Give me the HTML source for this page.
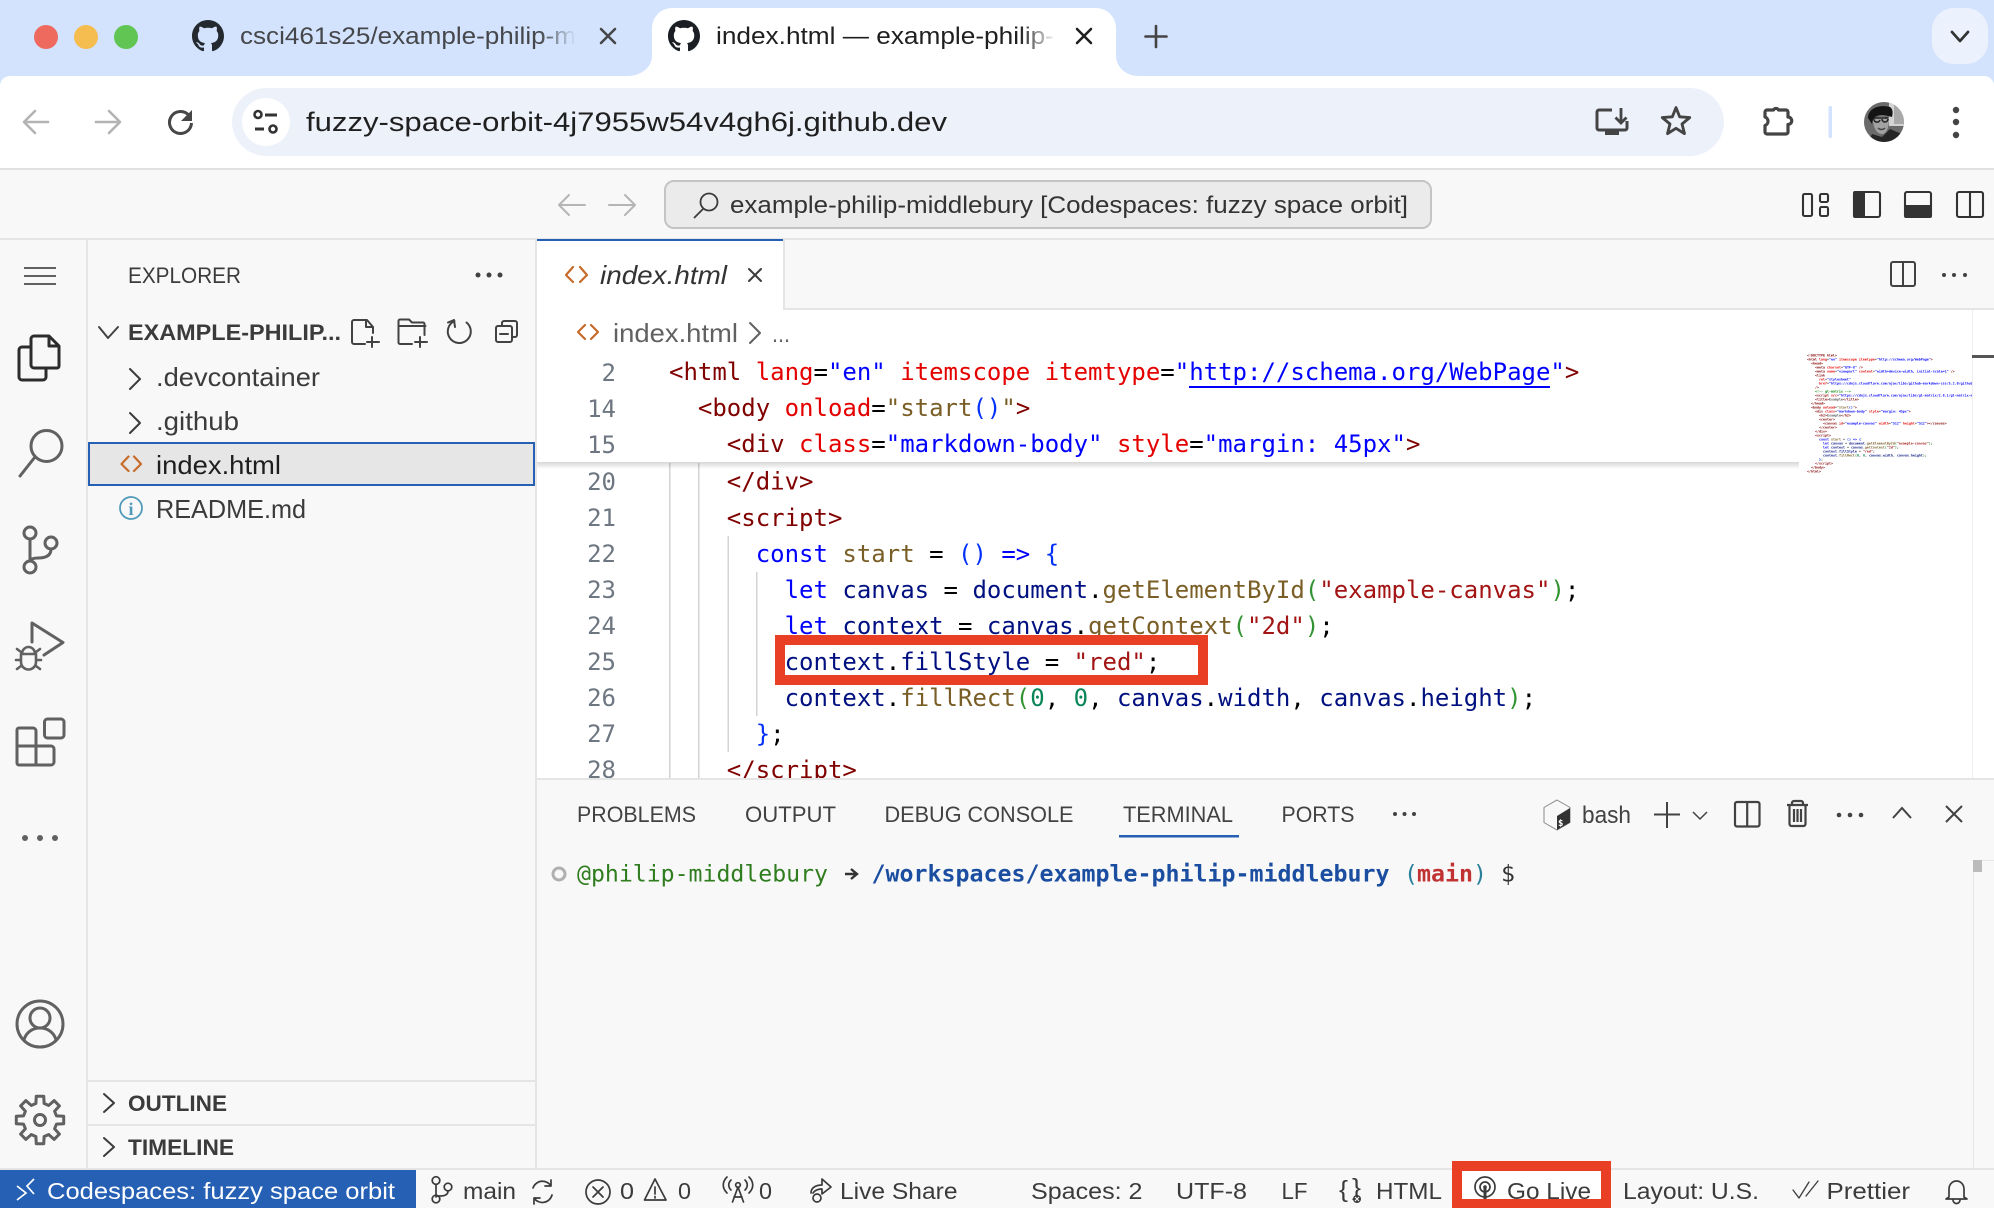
<!DOCTYPE html>
<html lang="en">
<head>
<meta charset="utf-8">
<title>index.html — example-philip-middlebury</title>
<style>
html,body{margin:0;padding:0;background:#f8f8f8;width:1994px;height:1208px;overflow:hidden}
svg{display:block}
text{font-family:"Liberation Sans",sans-serif;white-space:pre}
.m text,text.m{font-family:"DejaVu Sans Mono","Liberation Mono",monospace}
.code text{font-size:24px;fill:#000}
.ln text{font-size:24px;fill:#6e7681;text-anchor:end}
.mini text{font-size:3.32px;fill:#555;font-weight:700;text-rendering:geometricPrecision}
.t{fill:#800000}.a{fill:#e50000}.v{fill:#0000ff}.f{fill:#795e26}.d{fill:#001080}.s{fill:#a31515}.b{fill:#0431fa}.g{fill:#319331}.n{fill:#098658}.k{fill:#0000ff}
.st text{font-size:23px;fill:#3b3b3b}
.ic{fill:none;stroke:#616161;stroke-width:3;stroke-linecap:round;stroke-linejoin:round}
.ic2{fill:none;stroke:#3b3b3b;stroke-width:1.7;stroke-linecap:round;stroke-linejoin:round}
.tb{fill:none;stroke:#424242;stroke-width:2;stroke-linecap:round;stroke-linejoin:round}
</style>
</head>
<body>
<svg xmlns="http://www.w3.org/2000/svg" width="1994" height="1208" viewBox="0 0 1994 1208">
<defs>
<linearGradient id="f1" x1="0" x2="1" y1="0" y2="0"><stop offset="0" stop-color="#d3e3fd" stop-opacity="0"/><stop offset="1" stop-color="#d3e3fd"/></linearGradient>
<linearGradient id="f2" x1="0" x2="1" y1="0" y2="0"><stop offset="0" stop-color="#fff" stop-opacity="0"/><stop offset="1" stop-color="#fff"/></linearGradient>
<linearGradient id="sh" x1="0" x2="0" y1="0" y2="1"><stop offset="0" stop-color="#000" stop-opacity=".16"/><stop offset="1" stop-color="#000" stop-opacity="0"/></linearGradient>
<clipPath id="ed"><rect x="537" y="310" width="1262" height="468"/></clipPath>
<clipPath id="mm"><rect x="1800" y="340" width="172" height="140"/></clipPath>
<clipPath id="av"><circle cx="1884" cy="122" r="20"/></clipPath>
<path id="gh" d="M8 0C3.58 0 0 3.58 0 8c0 3.54 2.29 6.53 5.47 7.59.4.07.55-.17.55-.38 0-.19-.01-.82-.01-1.49-2.01.37-2.53-.49-2.69-.94-.09-.23-.48-.94-.82-1.13-.28-.15-.68-.52-.01-.53.63-.01 1.08.58 1.23.82.72 1.21 1.87.87 2.33.66.07-.52.28-.87.51-1.07-1.78-.2-3.64-.89-3.64-3.95 0-.87.31-1.59.82-2.15-.08-.2-.36-1.02.08-2.12 0 0 .67-.21 2.2.82.64-.18 1.32-.27 2-.27.68 0 1.36.09 2 .27 1.53-1.04 2.2-.82 2.2-.82.44 1.1.16 1.92.08 2.12.51.56.82 1.27.82 2.15 0 3.07-1.87 3.75-3.65 3.95.29.25.54.73.54 1.48 0 1.07-.01 1.93-.01 2.2 0 .21.15.46.55.38A8.013 8.013 0 0016 8c0-4.42-3.58-8-8-8z"/>
</defs>

<!-- page background -->
<rect width="1994" height="1208" fill="#f8f8f8"/>

<!-- tab strip -->
<rect width="1994" height="84" fill="#d3e3fd"/>
<path d="M0 86a10 10 0 0 1 10-10H1984a10 10 0 0 1 10 10V168H0z" fill="#fff"/>
<circle cx="46" cy="37" r="12" fill="#ee6a5f"/>
<circle cx="86" cy="37" r="12" fill="#f5bd4f"/>
<circle cx="126" cy="37" r="12" fill="#61c554"/>
<use href="#gh" transform="translate(192,20) scale(2)" fill="#24292f"/>
<text x="240" y="44" font-size="24" fill="#45474a" textLength="336" lengthAdjust="spacingAndGlyphs">csci461s25/example-philip-m</text>
<rect x="540" y="14" width="36" height="44" fill="url(#f1)"/>
<path d="M601 29l14 14M615 29l-14 14" fill="none" stroke="#45474a" stroke-width="2.6" stroke-linecap="round"/>
<path d="M628 76a24 20 0 0 0 24-20V28a20 20 0 0 1 20-20H1096a20 20 0 0 1 20 20V56a22 20 0 0 0 22 20Z" fill="#fff"/>
<use href="#gh" transform="translate(668,20) scale(2)" fill="#1b1f23"/>
<text x="716" y="44" font-size="24" fill="#1f1f1f" textLength="338" lengthAdjust="spacingAndGlyphs">index.html — example-philip-</text>
<rect x="1020" y="14" width="36" height="44" fill="url(#f2)"/>
<path d="M1077 29l14 14M1091 29l-14 14" fill="none" stroke="#1f1f1f" stroke-width="2.6" stroke-linecap="round"/>
<path d="M1156 26v21M1145.500 36.500h21" fill="none" stroke="#444" stroke-width="2.600" stroke-linecap="round"/>
<rect x="1932" y="8" width="56" height="56" rx="22" fill="#ecf2fd"/>
<path d="M1952 32l8 9 8-9" fill="none" stroke="#333" stroke-width="2.800" stroke-linecap="round" stroke-linejoin="round"/>

<!-- toolbar -->
<path d="M48 122H26M35 111L24 122L35 133" fill="none" stroke="#b3b3b3" stroke-width="2.600" stroke-linecap="round" stroke-linejoin="round"/>
<path d="M96 122H118M109 111L120 122L109 133" fill="none" stroke="#b3b3b3" stroke-width="2.600" stroke-linecap="round" stroke-linejoin="round"/>
<path d="M189 115.500a11 11 0 1 0 2.500 7.500" fill="none" stroke="#474747" stroke-width="3"/>
<path d="M192 110v11h-11z" fill="#474747"/>
<rect x="232" y="88" width="1492" height="68" rx="34" fill="#edf2fa"/>
<circle cx="266" cy="122" r="24" fill="#fff"/>
<circle cx="258" cy="114.500" r="3.500" fill="none" stroke="#333" stroke-width="2.600"/>
<path d="M265 115h12M255 129h9" stroke="#333" stroke-width="3" fill="none"/>
<circle cx="273" cy="129" r="3.500" fill="none" stroke="#333" stroke-width="2.600"/>
<text x="306" y="131" font-size="26.500" fill="#1f1f1f" textLength="641" lengthAdjust="spacingAndGlyphs">fuzzy-space-orbit-4j7955w54v4gh6j.github.dev</text>
<path d="M1612 110h-13a2 2 0 0 0-2 2v16a2 2 0 0 0 2 2h26a2 2 0 0 0 2-2v-7" fill="none" stroke="#444" stroke-width="3"/>
<rect x="1605" y="130" width="14" height="5" fill="#444"/>
<path d="M1621 108v14M1615.500 117.500l5.500 5.500 5.500-5.500" fill="none" stroke="#444" stroke-width="2.800"/>
<path transform="translate(1676,122) scale(.9)" d="M0-16L4.100-5.700 15.200-4.900 6.700 2.200 9.400 12.900 0 7-9.400 12.900-6.700 2.200-15.200-4.900-4.100-5.700Z" fill="none" stroke="#444" stroke-width="3.200" stroke-linejoin="round"/>
<path d="M1767 110h6.500a2.800 2.800 0 0 1 5 0H1786a2 2 0 0 1 2 2v5a3.500 3.500 0 0 1 0 7.500V132a2 2 0 0 1-2 2H1767a2 2 0 0 1-2-2v-6.500a4.500 4.500 0 0 0 0-8.500V112a2 2 0 0 1 2-2z" fill="none" stroke="#444" stroke-width="3.200" stroke-linejoin="round"/>
<rect x="1828.500" y="106" width="3.500" height="32" rx="1.500" fill="#d3e3fd"/>
<g clip-path="url(#av)">
<rect x="1864" y="102" width="40" height="40" fill="#6a6a6a"/>
<path d="M1889 102h15v24h-15z" fill="#d4d4d4"/>
<path d="M1894 104h10v20h-10z" fill="#a9a9a9"/>
<path d="M1868 118c0-9 10-14 22-11 3 2 3 6 2 10l-4-1c-6-2-12-1-15 3l-1 5z" fill="#141414"/>
<path d="M1873 119c5-3 13-3 16 0 0 7-2 15-7 15-5 0-9-6-9-15z" fill="#a2a2a2"/>
<path d="M1874 118h14M1874 118a3 3 0 0 0 6 2M1882 119a3 3 0 0 0 6 0" fill="none" stroke="#222" stroke-width="1.500"/>
<path d="M1878 128c2 2 5 2 7 0" fill="none" stroke="#444" stroke-width="1.500"/>
<path d="M1868 142l4-8 10 3 8-8 14 6v9z" fill="#252525"/>
</g>
<circle cx="1956" cy="110" r="3.200" fill="#444"/><circle cx="1956" cy="122" r="3.200" fill="#444"/><circle cx="1956" cy="135" r="3.200" fill="#444"/>
<rect y="168" width="1994" height="2" fill="#e0e0e0"/>

<!-- title bar -->
<path d="M585 205H560M569 195L559 205L569 215" fill="none" stroke="#b5b5b5" stroke-width="2" stroke-linecap="round" stroke-linejoin="round"/>
<path d="M609 205H634M625 195L635 205L625 215" fill="none" stroke="#b5b5b5" stroke-width="2" stroke-linecap="round" stroke-linejoin="round"/>
<rect x="665" y="181" width="766" height="47" rx="9" fill="#ebebeb" stroke="#c4c4c4" stroke-width="2"/>
<circle cx="709" cy="202" r="8.500" fill="none" stroke="#3b3b3b" stroke-width="1.800"/>
<path d="M703 209L694 218" fill="none" stroke="#3b3b3b" stroke-width="1.800"/>
<text x="730" y="213" font-size="24" fill="#333" textLength="678" lengthAdjust="spacingAndGlyphs">example-philip-middlebury [Codespaces: fuzzy space orbit]</text>
<g fill="none" stroke="#333" stroke-width="2.100">
<rect x="1803" y="194" width="9" height="22" rx="1.500"/>
<rect x="1820" y="194" width="8" height="8" rx="1.500"/>
<rect x="1820" y="207" width="8" height="9" rx="1.500"/>
<rect x="1854" y="192" width="26" height="25" rx="2"/>
<rect x="1905" y="192" width="26" height="25" rx="2"/>
<rect x="1957" y="192" width="26" height="25" rx="2"/>
<path d="M1970 192v25"/>
</g>
<rect x="1853" y="191" width="12" height="27" rx="2" fill="#333"/>
<rect x="1904" y="205" width="28" height="13" rx="2" fill="#333"/>
<rect y="238" width="1994" height="2" fill="#e5e5e5"/>

<!-- activity bar -->
<rect x="86" y="240" width="2" height="930" fill="#e5e5e5"/>
<path d="M24 268H56M24 276H56M24 284H56" stroke="#616161" stroke-width="2" fill="none"/>
<g fill="none" stroke="#2c2c2c" stroke-width="3" stroke-linejoin="round">
<path d="M31 347H22a3 3 0 0 0-3 3v27a3 3 0 0 0 3 3h21a3 3 0 0 0 3-3v-8"/>
<path d="M34 336h15l10 10v20a2 2 0 0 1-2 2H34a3 3 0 0 1-3-3V339a3 3 0 0 1 3-3z"/>
<path d="M49 336v10h10"/>
</g>
<circle cx="46.500" cy="446" r="15.500" class="ic"/>
<path d="M35 457L20 476" class="ic"/>
<circle cx="30" cy="533" r="6" class="ic"/><circle cx="51" cy="543" r="6" class="ic"/><circle cx="30" cy="567" r="6" class="ic"/>
<path d="M30 539V561M51 549c0 8-8 9-13 9-4 0-8 1-8 3" class="ic"/>
<path d="M32 642V623L63 642.500L44 655" class="ic"/>
<g class="ic" style="stroke-width:2.600">
<path d="M21 654h15v8a7.500 7.500 0 0 1-15 0zM22 654c0-4 3-7 6.500-7s6.500 3 6.500 7"/>
<path d="M21 652l-4-3M36 652l4-3M20 660h-4M37 660h4M21 666l-4 3M36 666l4 3"/>
</g>
<rect x="44.500" y="719" width="19.500" height="19" rx="3" class="ic"/>
<path d="M19 728h14a3 3 0 0 1 3 3v15h15a3 3 0 0 1 3 3v13a3 3 0 0 1-3 3H19a2 2 0 0 1-2-2V730a2 2 0 0 1 2-2zM17 746h19V765" class="ic"/>
<circle cx="25" cy="838" r="3" fill="#616161"/><circle cx="40" cy="838" r="3" fill="#616161"/><circle cx="55" cy="838" r="3" fill="#616161"/>
<circle cx="40" cy="1024" r="23" class="ic"/>
<circle cx="40" cy="1018" r="10" class="ic"/>
<path d="M24 1040c2-8 9-12 16-12s14 4 16 12" class="ic"/>
<g transform="translate(40,1120)">
<path class="ic" d="M-4.100-16.500L-3.750-23.700L3.750-23.700L4.100-16.500L8.770-14.570L14.100-19.410L19.410-14.100L14.570-8.770L16.500-4.100L23.700-3.750L23.700 3.750L16.500 4.100L14.570 8.770L19.410 14.100L14.100 19.410L8.770 14.570L4.100 16.500L3.750 23.700L-3.750 23.700L-4.100 16.500L-8.770 14.570L-14.100 19.410L-19.410 14.100L-14.570 8.770L-16.500 4.100L-23.700 3.750L-23.700-3.750L-16.500-4.100L-14.570-8.770L-19.410-14.100L-14.100-19.410L-8.770-14.570Z"/>
<circle r="5.500" class="ic"/>
</g>

<!-- sidebar -->
<rect x="535" y="240" width="2" height="930" fill="#e5e5e5"/>
<text x="128" y="283" font-size="22" fill="#3b3b3b" textLength="113" lengthAdjust="spacingAndGlyphs">EXPLORER</text>
<circle cx="478" cy="275" r="2.500" fill="#424242"/><circle cx="489" cy="275" r="2.500" fill="#424242"/><circle cx="500" cy="275" r="2.500" fill="#424242"/>
<path d="M99 327L108 338L118 327" class="tb"/>
<text x="128" y="340" font-size="22" font-weight="700" fill="#3b3b3b" textLength="213" lengthAdjust="spacingAndGlyphs">EXAMPLE-PHILIP...</text>
<g class="tb">
<path d="M365 344H354a2 2 0 0 1-2-2V322a2 2 0 0 1 2-2h13l6 7v6M366 320v7h7M372 337v10M367 342h12"/>
<path d="M412 344H400a1.500 1.500 0 0 1-1.500-1.500V321a1.500 1.500 0 0 1 1.500-1.500h9l3 3h11a1.500 1.500 0 0 1 1.500 1.500v11M398.500 326h27M420 337v10M415 342h12"/>
<path d="M466.500 322.500a11.500 11.500 0 1 1-12-1.500M454 320l1 7M454 320l-6 2.500"/>
<path d="M502 326v-3a2 2 0 0 1 2-2h11a2 2 0 0 1 2 2v12a2 2 0 0 1-2 2h-2M498 326h12a2 2 0 0 1 2 2v12a2 2 0 0 1-2 2H498a2 2 0 0 1-2-2v-12a2 2 0 0 1 2-2zM500 334h8"/>
</g>
<path d="M130 369L140 379L130 389" class="tb" style="stroke:#3b3b3b"/>
<text x="156" y="386" font-size="26" fill="#3b3b3b" textLength="164" lengthAdjust="spacingAndGlyphs">.devcontainer</text>
<path d="M130 413L140 423L130 433" class="tb" style="stroke:#3b3b3b"/>
<text x="156" y="430" font-size="26" fill="#3b3b3b" textLength="83" lengthAdjust="spacingAndGlyphs">.github</text>
<rect x="89" y="443" width="445" height="42" fill="#e6e6e6" stroke="#2560b5" stroke-width="2"/>
<path d="M128.500 456.500L121.500 464L128.500 471M134 456.500L141 464L134 471" fill="none" stroke="#c76b29" stroke-width="2.200" stroke-linecap="round" stroke-linejoin="round"/>
<text x="156" y="474" font-size="26" fill="#1e1e1e" textLength="125" lengthAdjust="spacingAndGlyphs">index.html</text>
<circle cx="131" cy="508" r="11" fill="none" stroke="#519aba" stroke-width="1.800"/>
<text x="131" y="515" font-size="18" font-weight="700" fill="#519aba" text-anchor="middle" style="font-family:'Liberation Serif',serif">i</text>
<text x="156" y="518" font-size="26" fill="#3b3b3b" textLength="150" lengthAdjust="spacingAndGlyphs">README.md</text>
<rect x="88" y="1080" width="447" height="2" fill="#e5e5e5"/>
<path d="M104 1094L114 1103L104 1112" class="tb" style="stroke:#3b3b3b"/>
<text x="128" y="1111" font-size="22.500" font-weight="700" fill="#3b3b3b" textLength="99" lengthAdjust="spacingAndGlyphs">OUTLINE</text>
<rect x="88" y="1124" width="447" height="2" fill="#e5e5e5"/>
<path d="M104 1138L114 1147L104 1156" class="tb" style="stroke:#3b3b3b"/>
<text x="128" y="1155" font-size="22.500" font-weight="700" fill="#3b3b3b" textLength="106" lengthAdjust="spacingAndGlyphs">TIMELINE</text>

<!-- editor tab band -->
<rect x="537" y="308" width="1457" height="2" fill="#e5e5e5"/>
<rect x="537" y="240" width="246" height="70" fill="#fff"/>
<rect x="537" y="239" width="246" height="2" fill="#2560b5"/>
<rect x="783" y="240" width="2" height="69" fill="#e5e5e5"/>
<path d="M573 267L566 275L573 282M580 267L587 275L580 282" fill="none" stroke="#c76b29" stroke-width="2.200" stroke-linecap="round" stroke-linejoin="round"/>
<text x="600" y="284" font-size="26" font-style="italic" fill="#333" textLength="127" lengthAdjust="spacingAndGlyphs">index.html</text>
<path d="M749 269l12 12M761 269l-12 12" fill="none" stroke="#3b3b3b" stroke-width="2" stroke-linecap="round"/>
<g fill="none" stroke="#424242" stroke-width="2"><rect x="1891" y="262" width="24" height="24" rx="2"/><path d="M1903 262v24"/></g>
<circle cx="1944" cy="275" r="2" fill="#424242"/><circle cx="1954" cy="275" r="2" fill="#424242"/><circle cx="1965" cy="275" r="2" fill="#424242"/>

<!-- editor -->
<rect x="537" y="310" width="1457" height="468" fill="#fff"/>
<path d="M585 325L578 332L585 339M591 325L598 332L591 339" fill="none" stroke="#c76b29" stroke-width="2.200" stroke-linecap="round" stroke-linejoin="round"/>
<text x="613" y="342" font-size="26" fill="#616161" textLength="125" lengthAdjust="spacingAndGlyphs">index.html</text>
<path d="M750 323L760 333L750 343" class="tb" style="stroke:#616161"/>
<text x="772" y="342" font-size="24" fill="#616161" textLength="18" lengthAdjust="spacingAndGlyphs">...</text>

<g clip-path="url(#ed)">
<!-- indent guides -->
<g fill="#d3d3d3">
<rect x="669" y="463" width="1.500" height="315"/>
<rect x="698" y="463" width="1.500" height="315"/>
<rect x="727.500" y="536" width="1.500" height="216"/>
<rect x="756" y="572" width="1.500" height="144"/>
</g>

<g class="m ln">
<text x="616" y="490">20</text><text x="616" y="526">21</text><text x="616" y="562">22</text><text x="616" y="598">23</text><text x="616" y="634">24</text><text x="616" y="670">25</text><text x="616" y="706">26</text><text x="616" y="742">27</text><text x="616" y="778">28</text>
</g>

<g class="m code">
<text x="726.800" y="489.500"><tspan class="t">&lt;/div&gt;</tspan></text>
<text x="726.800" y="526"><tspan class="t">&lt;script&gt;</tspan></text>
<text x="755.700" y="562"><tspan class="k">const</tspan> <tspan class="f">start</tspan> = <tspan class="b">()</tspan> <tspan class="k">=&gt;</tspan> <tspan class="b">{</tspan></text>
<text x="784.600" y="598"><tspan class="k">let</tspan> <tspan class="d">canvas</tspan> = <tspan class="d">document</tspan>.<tspan class="f">getElementById</tspan><tspan class="g">(</tspan><tspan class="s">"example-canvas"</tspan><tspan class="g">)</tspan>;</text>
<text x="784.600" y="634"><tspan class="k">let</tspan> <tspan class="d">context</tspan> = <tspan class="d">canvas</tspan>.<tspan class="f">getContext</tspan><tspan class="g">(</tspan><tspan class="s">"2d"</tspan><tspan class="g">)</tspan>;</text>
</g>
<!-- annotation box -->
<rect x="780" y="640" width="423" height="40" fill="#fff" stroke="#e93f25" stroke-width="10"/>
<g class="m code">
<text x="784.600" y="670"><tspan class="d">context</tspan>.<tspan class="d">fillStyle</tspan> = <tspan class="s">"red"</tspan>;</text>
<text x="784.600" y="706"><tspan class="d">context</tspan>.<tspan class="f">fillRect</tspan><tspan class="g">(</tspan><tspan class="n">0</tspan>, <tspan class="n">0</tspan>, <tspan class="d">canvas</tspan>.<tspan class="d">width</tspan>, <tspan class="d">canvas</tspan>.<tspan class="d">height</tspan><tspan class="g">)</tspan>;</text>
<text x="755.700" y="742"><tspan class="b">}</tspan>;</text>
<text x="726.800" y="778"><tspan class="t">&lt;/script&gt;</tspan></text>
</g>

<!-- sticky scroll -->
<rect x="537" y="353" width="1262" height="109" fill="#fff"/>
<rect x="537" y="462" width="1262" height="7" fill="url(#sh)"/>
<g class="m ln">
<text x="616" y="381">2</text><text x="616" y="417">14</text><text x="616" y="453">15</text>
</g>
<g class="m code">
<text x="669" y="380"><tspan class="t">&lt;html</tspan> <tspan class="a">lang</tspan>=<tspan class="v">"en"</tspan> <tspan class="a">itemscope</tspan> <tspan class="a">itemtype</tspan>=<tspan class="v">"http://schema.org/WebPage"</tspan><tspan class="t">&gt;</tspan></text>
<text x="697.900" y="416"><tspan class="t">&lt;body</tspan> <tspan class="a">onload</tspan>=<tspan class="f">"start</tspan><tspan class="b">()</tspan><tspan class="f">"</tspan><tspan class="t">&gt;</tspan></text>
<text x="726.800" y="452"><tspan class="t">&lt;div</tspan> <tspan class="a">class</tspan>=<tspan class="v">"markdown-body"</tspan> <tspan class="a">style</tspan>=<tspan class="v">"margin: 45px"</tspan><tspan class="t">&gt;</tspan></text>
</g>
<rect x="1189" y="386" width="361" height="2" fill="#0000ff"/>
</g>

<!-- minimap -->
<rect x="1972" y="310" width="1" height="468" fill="#eeeeee"/>
<rect x="1972" y="355" width="22" height="3" fill="#555"/>
<g class="m mini" clip-path="url(#mm)">
<text x="1807" y="356.500"><tspan class="t">&lt;!DOCTYPE html&gt;</tspan></text>
<text x="1807" y="360.500"><tspan class="t">&lt;html</tspan> <tspan class="a">lang</tspan>=<tspan class="v">"en"</tspan> <tspan class="a">itemscope</tspan> <tspan class="a">itemtype</tspan>=<tspan class="v">"http://schema.org/WebPage"</tspan><tspan class="t">&gt;</tspan></text>
<text x="1811" y="364.500"><tspan class="t">&lt;head&gt;</tspan></text>
<text x="1815" y="368.500"><tspan class="t">&lt;meta</tspan> <tspan class="a">charset</tspan>=<tspan class="v">"UTF-8"</tspan> <tspan class="t">/&gt;</tspan></text>
<text x="1815" y="372.500"><tspan class="t">&lt;meta</tspan> <tspan class="a">name</tspan>=<tspan class="v">"viewport"</tspan> <tspan class="a">content</tspan>=<tspan class="v">"width=device-width, initial-scale=1"</tspan> <tspan class="t">/&gt;</tspan></text>
<text x="1815" y="376.500"><tspan class="t">&lt;link</tspan></text>
<text x="1819" y="380.500"><tspan class="a">rel</tspan>=<tspan class="v">"stylesheet"</tspan></text>
<text x="1819" y="384.500"><tspan class="a">href</tspan>=<tspan class="v">"https://cdnjs.cloudflare.com/ajax/libs/github-markdown-css/5.2.0/github-markdown.min.css"</tspan></text>
<text x="1815" y="388.500"><tspan class="t">/&gt;</tspan></text>
<text x="1815" y="392.500" style="fill:#008000">&lt;!-- gl-matrix --&gt;</text>
<text x="1815" y="396.500"><tspan class="t">&lt;script</tspan> <tspan class="a">src</tspan>=<tspan class="v">"https://cdnjs.cloudflare.com/ajax/libs/gl-matrix/2.8.1/gl-matrix-min.js"</tspan><tspan class="t">&gt;&lt;/script&gt;</tspan></text>
<text x="1815" y="400.500"><tspan class="t">&lt;title&gt;</tspan>Example<tspan class="t">&lt;/title&gt;</tspan></text>
<text x="1811" y="404.500"><tspan class="t">&lt;/head&gt;</tspan></text>
<text x="1811" y="408.500"><tspan class="t">&lt;body</tspan> <tspan class="a">onload</tspan>=<tspan class="f">"start</tspan><tspan class="b">()</tspan><tspan class="f">"</tspan><tspan class="t">&gt;</tspan></text>
<text x="1815" y="412.500"><tspan class="t">&lt;div</tspan> <tspan class="a">class</tspan>=<tspan class="v">"markdown-body"</tspan> <tspan class="a">style</tspan>=<tspan class="v">"margin: 45px"</tspan><tspan class="t">&gt;</tspan></text>
<text x="1819" y="416.500"><tspan class="t">&lt;h2&gt;</tspan>Example<tspan class="t">&lt;/h2&gt;</tspan></text>
<text x="1819" y="420.500"><tspan class="t">&lt;center&gt;</tspan></text>
<text x="1823" y="424.500"><tspan class="t">&lt;canvas</tspan> <tspan class="a">id</tspan>=<tspan class="v">"example-canvas"</tspan> <tspan class="a">width</tspan>=<tspan class="v">"512"</tspan> <tspan class="a">height</tspan>=<tspan class="v">"512"</tspan><tspan class="t">&gt;&lt;/canvas&gt;</tspan></text>
<text x="1819" y="428.500"><tspan class="t">&lt;/center&gt;</tspan></text>
<text x="1815" y="432.500"><tspan class="t">&lt;/div&gt;</tspan></text>
<text x="1815" y="436.500"><tspan class="t">&lt;script&gt;</tspan></text>
<text x="1819" y="440.500"><tspan class="k">const</tspan> <tspan class="f">start</tspan> = <tspan class="b">()</tspan> <tspan class="k">=&gt;</tspan> <tspan class="b">{</tspan></text>
<text x="1823" y="444.500"><tspan class="k">let</tspan> <tspan class="d">canvas</tspan> = <tspan class="d">document</tspan>.<tspan class="f">getElementById</tspan><tspan class="g">(</tspan><tspan class="s">"example-canvas"</tspan><tspan class="g">)</tspan>;</text>
<text x="1823" y="448.500"><tspan class="k">let</tspan> <tspan class="d">context</tspan> = <tspan class="d">canvas</tspan>.<tspan class="f">getContext</tspan><tspan class="g">(</tspan><tspan class="s">"2d"</tspan><tspan class="g">)</tspan>;</text>
<text x="1823" y="452.500"><tspan class="d">context</tspan>.<tspan class="d">fillStyle</tspan> = <tspan class="s">"red"</tspan>;</text>
<text x="1823" y="456.500"><tspan class="d">context</tspan>.<tspan class="f">fillRect</tspan><tspan class="g">(</tspan><tspan class="n">0</tspan>, <tspan class="n">0</tspan>, <tspan class="d">canvas</tspan>.<tspan class="d">width</tspan>, <tspan class="d">canvas</tspan>.<tspan class="d">height</tspan><tspan class="g">)</tspan>;</text>
<text x="1819" y="460.500"><tspan class="b">}</tspan>;</text>
<text x="1815" y="464.500"><tspan class="t">&lt;/script&gt;</tspan></text>
<text x="1811" y="468.500"><tspan class="t">&lt;/body&gt;</tspan></text>
<text x="1807" y="472.500"><tspan class="t">&lt;/html&gt;</tspan></text>
</g>

<!-- panel -->
<rect x="537" y="778" width="1457" height="392" fill="#f8f8f8"/>
<rect x="537" y="778" width="1457" height="2" fill="#e5e5e5"/>
<g font-size="22" fill="#424242">
<text x="577" y="822" textLength="119" lengthAdjust="spacingAndGlyphs">PROBLEMS</text>
<text x="745" y="822" textLength="91" lengthAdjust="spacingAndGlyphs">OUTPUT</text>
<text x="884.500" y="822" textLength="189" lengthAdjust="spacingAndGlyphs">DEBUG CONSOLE</text>
<text x="1123" y="822" textLength="110" lengthAdjust="spacingAndGlyphs">TERMINAL</text>
<text x="1281.500" y="822" textLength="73" lengthAdjust="spacingAndGlyphs">PORTS</text>
</g>
<rect x="1119" y="835" width="120" height="2.500" fill="#2560b5"/>
<circle cx="1395" cy="814" r="2" fill="#424242"/><circle cx="1404.500" cy="814" r="2" fill="#424242"/><circle cx="1414" cy="814" r="2" fill="#424242"/>
<path d="M1557 800L1570 807.500V822.500L1557 830L1544 822.500V807.500Z" fill="none" stroke="#8a8a8a" stroke-width="1"/>
<path d="M1570 808V822.500L1557 830V816Z" fill="#333"/>
<text x="1558" y="826" font-size="9" font-weight="700" fill="#fff" class="m">$_</text>
<text x="1582" y="823" font-size="24" fill="#424242" textLength="49" lengthAdjust="spacingAndGlyphs">bash</text>
<path d="M1667 802v26M1654 814.500h26" fill="none" stroke="#424242" stroke-width="2"/>
<path d="M1693 812l7 7 7-7" fill="none" stroke="#424242" stroke-width="1.500"/>
<g fill="none" stroke="#424242" stroke-width="2.200" stroke-linejoin="round">
<rect x="1735" y="802" width="24.500" height="24.500" rx="2"/><path d="M1747.200 802v24.500"/>
<path d="M1787 805h21M1792 805v-2a2 2 0 0 1 2-2h7a2 2 0 0 1 2 2v2M1789.500 805v19a2 2 0 0 0 2 2h12a2 2 0 0 0 2-2v-19M1794 809v13M1797.500 809v13M1801 809v13"/>
</g>
<circle cx="1839" cy="815" r="2.300" fill="#424242"/><circle cx="1850" cy="815" r="2.300" fill="#424242"/><circle cx="1861" cy="815" r="2.300" fill="#424242"/>
<path d="M1893 818L1902 808L1911 818" fill="none" stroke="#424242" stroke-width="2"/>
<path d="M1946 806l16 16M1962 806l-16 16" fill="none" stroke="#424242" stroke-width="2"/>

<circle cx="559" cy="874" r="6" fill="none" stroke="#b0b0b0" stroke-width="3"/>
<g class="m" font-size="23.200">
<text x="577" y="881.500" fill="#2f7d1f" class="m" textLength="251" lengthAdjust="spacingAndGlyphs">@philip-middlebury</text>
<path d="M845 874h11M851 869l6 5-6 5" fill="none" stroke="#333" stroke-width="2.400"/>
<text x="871.500" y="881.500" fill="#1b4ea0" font-weight="700" class="m" textLength="518" lengthAdjust="spacingAndGlyphs">/workspaces/example-philip-middlebury</text>
<text x="1404" y="881.500" fill="#2a7f9a" class="m">(</text>
<text x="1417" y="881.500" fill="#c13333" font-weight="700" class="m" textLength="56" lengthAdjust="spacingAndGlyphs">main</text>
<text x="1473" y="881.500" fill="#2a7f9a" class="m">)</text>
<text x="1501" y="881.500" fill="#333" class="m">$</text>
</g>
<rect x="1973" y="860" width="21" height="1" fill="#e5e5e5"/>
<rect x="1973" y="860" width="1" height="309" fill="#e5e5e5"/>
<rect x="1973" y="860" width="9" height="12" fill="#bbb"/>

<!-- status bar -->
<rect y="1168" width="1994" height="2" fill="#e5e5e5"/>
<rect y="1170" width="1994" height="38" fill="#f8f8f8"/>
<rect y="1170" width="416" height="38" fill="#2560b5"/>
<path d="M17 1186L26 1193L17 1200M34 1179L27 1186L34 1194" fill="none" stroke="#fff" stroke-width="1.700"/>
<g class="st">
<text x="47" y="1199" style="fill:#fff" textLength="348" lengthAdjust="spacingAndGlyphs">Codespaces: fuzzy space orbit</text>
<text x="463" y="1199" textLength="53" lengthAdjust="spacingAndGlyphs">main</text>
<text x="620" y="1199" textLength="14" lengthAdjust="spacingAndGlyphs">0</text>
<text x="678" y="1199" textLength="13" lengthAdjust="spacingAndGlyphs">0</text>
<text x="759" y="1199" textLength="13" lengthAdjust="spacingAndGlyphs">0</text>
<text x="840" y="1199" textLength="117.500" lengthAdjust="spacingAndGlyphs">Live Share</text>
<text x="1031" y="1199" textLength="111.500" lengthAdjust="spacingAndGlyphs">Spaces: 2</text>
<text x="1176" y="1199" textLength="71" lengthAdjust="spacingAndGlyphs">UTF-8</text>
<text x="1281.500" y="1199" textLength="26" lengthAdjust="spacingAndGlyphs">LF</text>
<text x="1339" y="1197" textLength="9" lengthAdjust="spacingAndGlyphs">{</text>
<text x="1352" y="1195" textLength="9" lengthAdjust="spacingAndGlyphs">}</text>
<text x="1376" y="1199" textLength="66" lengthAdjust="spacingAndGlyphs">HTML</text>
<text x="1623" y="1199" textLength="136" lengthAdjust="spacingAndGlyphs">Layout: U.S.</text>
<text x="1826.500" y="1199" textLength="83.500" lengthAdjust="spacingAndGlyphs">Prettier</text>
</g>
<rect x="1462" y="1171" width="139" height="28" fill="#fff"/>
<text x="1507" y="1199" font-size="23" fill="#3b3b3b" textLength="84" lengthAdjust="spacingAndGlyphs">Go Live</text>
<g class="ic2">
<circle cx="436" cy="1180.500" r="3.800"/><circle cx="448" cy="1187" r="3.800"/><circle cx="436" cy="1199" r="3.800"/>
<path d="M436 1184.500V1195M448 1191c0 4-4 5-8 5-3 0-4 0-4 1"/>
<path d="M533 1188a10 10 0 0 1 18-2M552 1195a10 10 0 0 1-18 3M551 1180v6h-6M534 1204v-6h6"/>
<circle cx="598" cy="1192" r="12"/><path d="M593 1187l10 10M603 1187l-10 10"/>
<path d="M655 1179L644.500 1200H666ZM655 1187v7M655 1196.500v1.500"/>
<circle cx="738" cy="1185" r="2.300"/>
<path d="M738 1187l-5.500 15M738 1187l5.500 15M734 1197h8M731 1180c-3 3-3 7 0 10M745 1180c3 3 3 7 0 10M727 1177c-5 5-5 11 0 16M749 1177c5 5 5 11 0 16"/>
<circle cx="817" cy="1198" r="4"/>
<path d="M811 1193c0-6 6-8 11-8v-6l9 8-9 7v-5c-4 0-7 1-9 4"/>
<circle cx="1357" cy="1199" r="4" style="fill:#3b3b3b;stroke:none"/>
<path d="M1793 1190l6 8 10-16M1806 1196l12-15" style="stroke-width:1.300"/>
<path d="M1949 1197v-8a7.500 8 0 0 1 15 0v8l3 2h-21zM1953 1200a3.500 3.500 0 0 0 7 0"/>
</g>
<path d="M1355 1197l4 4M1359 1197l-4 4" stroke="#fff" stroke-width="1" fill="none"/>
<g class="ic2">
<circle cx="1485" cy="1187" r="10"/><circle cx="1485" cy="1187" r="5"/>
</g>
<circle cx="1485" cy="1187" r="1.800" fill="#3b3b3b"/>
<rect x="1483.500" y="1187" width="3" height="13" fill="#3b3b3b"/>
<path d="M1452 1161H1611V1208H1452ZM1462 1171V1199H1601V1171Z" fill="#e93f25" fill-rule="evenodd"/>
</svg>
</body>
</html>
